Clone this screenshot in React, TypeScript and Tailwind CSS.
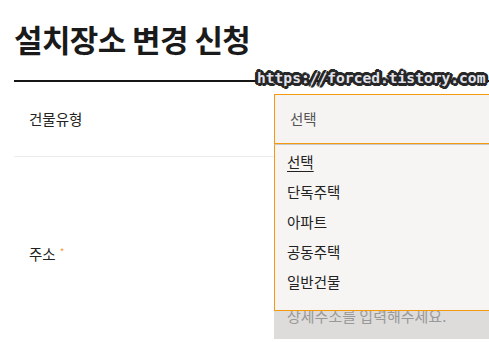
import { useState } from 'react'

const options = ['선택', '단독주택', '아파트', '공동주택', '일반건물']

export default function App(){
  const [selected] = useState('선택')

  return (
    <div className="relative w-[489px] h-[342px] overflow-hidden bg-white pl-[14px] text-[#222] [font-family:'Noto_Sans_CJK_KR',sans-serif]">
      <h1 className="pt-[18px] h-[80px] text-[31px] font-bold leading-[42px] tracking-[-0.6px] text-[#1a1a1a]">설치장소 변경 신청</h1>
      <div className="h-[2px] bg-[#161616]" />

      <div className="flex border-b border-[#ececec] w-[260px] overflow-visible">
        <div className="w-[260px] shrink-0 h-[74px] flex items-center pl-[15px] text-[14.5px]">건물유형</div>
        <div className="relative shrink-0 pt-[12px]">
          <div className="w-[240px] h-[50px] border border-[#f59a10] bg-[#f5f4f2] flex items-center pl-[15px] text-[14.5px] text-[#555]">{selected}</div>
          <ul className="absolute z-10 left-0 top-[62px] w-[240px] border-l border-b border-[#f59a10] border-t-[#c8c8c8] border-t bg-[#f6f5f3] pt-[2px] pb-[13px] text-[14.5px]">
            {options.map((o, i) => (
              <li key={o} className={`h-[30px] flex items-center pl-[12px] ${i === 0 ? 'underline underline-offset-[3px]' : ''}`}>{o}</li>
            ))}
          </ul>
        </div>
      </div>

      <div className="flex">
        <div className="w-[260px] shrink-0 flex items-center pl-[15px] text-[14.5px]">
          주소<span className="ml-[4px] -mt-[6px] text-[10px] text-[#f5a04a]">*</span>
        </div>
        <div className="flex flex-col gap-[10px] pt-[12px] pb-[12px]">
          <div className="w-[240px] h-[50px] bg-[#dddcda]" />
          <div className="w-[240px] h-[50px] bg-[#dddcda]" />
          <div className="w-[240px] h-[50px] bg-[#dddcda] flex items-center pl-[13px] pt-[5px] text-[15px] text-[#999]">상세주소를 입력해주세요.</div>
        </div>
      </div>

      <div className="absolute z-20 left-[257px] top-[68px] text-[14.6px] font-bold leading-[20px] text-[#e2e2ec] [font-family:'DejaVu_Sans_Mono',monospace] [text-shadow:-2px_-2px_0_#262626,2px_-2px_0_#262626,-2px_2px_0_#262626,2px_2px_0_#262626,0_-3px_0_#262626,0_3px_0_#262626,-3px_0_0_#262626,3px_0_0_#262626,-1px_-3px_0_#262626,1px_3px_0_#262626,-3px_1px_0_#262626,3px_-1px_0_#262626]">
        https://forced.tistory.com
      </div>
    </div>
  )
}
